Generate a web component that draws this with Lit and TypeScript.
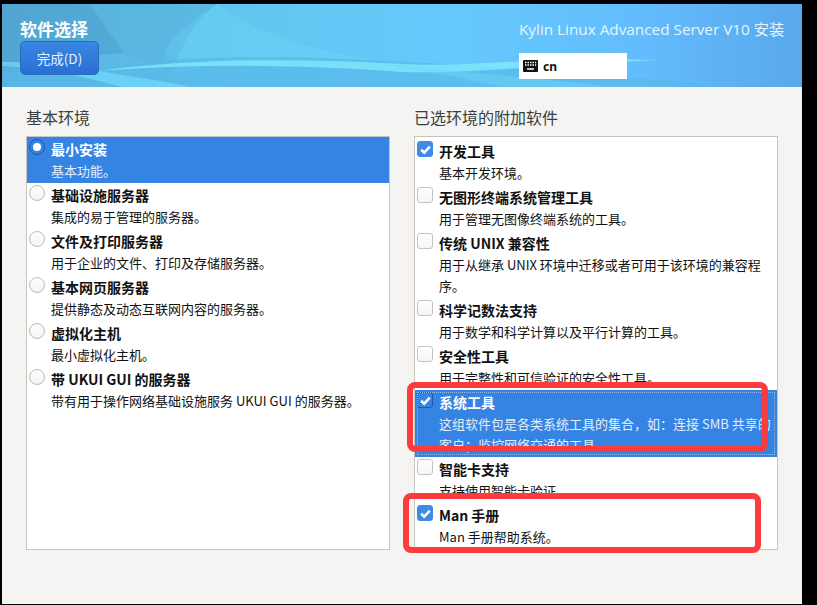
import { LitElement, html, css, svg } from 'lit'
import { customElement } from 'lit/decorators.js'
import { classMap } from 'lit/directives/class-map.js'

interface Opt {
  title: string
  desc: string
  on?: boolean
  sel?: boolean
  focus?: boolean
}

const envs: Opt[] = [
  { title: '最小安装', desc: '基本功能。', on: true, sel: true },
  { title: '基础设施服务器', desc: '集成的易于管理的服务器。' },
  { title: '文件及打印服务器', desc: '用于企业的文件、打印及存储服务器。' },
  { title: '基本网页服务器', desc: '提供静态及动态互联网内容的服务器。' },
  { title: '虚拟化主机', desc: '最小虚拟化主机。' },
  { title: '带 UKUI GUI 的服务器', desc: '带有用于操作网络基础设施服务 UKUI GUI 的服务器。' },
]

const addons: Opt[] = [
  { title: '开发工具', desc: '基本开发环境。', on: true },
  { title: '无图形终端系统管理工具', desc: '用于管理无图像终端系统的工具。' },
  { title: '传统 UNIX 兼容性', desc: '用于从继承 UNIX 环境中迁移或者可用于该环境的兼容程序。' },
  { title: '科学记数法支持', desc: '用于数学和科学计算以及平行计算的工具。' },
  { title: '安全性工具', desc: '用于完整性和可信验证的安全性工具。' },
  { title: '系统工具', desc: '这组软件包是各类系统工具的集合，如：连接 SMB 共享的客户；监控网络交通的工具。', on: true, sel: true, focus: true },
  { title: '智能卡支持', desc: '支持使用智能卡验证。' },
  { title: 'Man 手册', desc: 'Man 手册帮助系统。', on: true },
]

const waves = svg`
  <defs>
    <linearGradient id="base" x1="0" y1="0" x2="1" y2="0">
      <stop offset="0" stop-color="#57b0dc"/>
      <stop offset="0.3" stop-color="#62c6f0"/>
      <stop offset="0.55" stop-color="#66c9fb"/>
      <stop offset="0.8" stop-color="#63bcfd"/>
      <stop offset="1" stop-color="#58a8ec"/>
    </linearGradient>
  </defs>
  <rect width="800" height="83" fill="url(#base)"/>
  <path d="M0 0H88L122 49L60 54L0 64Z" fill="#4c9ccb" opacity=".55"/>
  <path d="M88 0H215C170 30 150 50 170 70L122 49Z" fill="#58b4de" opacity=".7"/>
  <path d="M215 0C260 30 300 46 400 60C300 52 240 58 170 70C180 40 190 20 215 0Z" fill="#6ad4f4" opacity=".55"/>
  <path d="M0 70C100 58 220 50 320 54C420 58 520 64 740 83H0Z" fill="#58b8e8" opacity=".65"/>
  <path d="M96 67C190 54 300 54 400 60C470 64 520 52 660 56C520 62 470 70 400 68C300 60 190 60 96 67Z" fill="#82e8fc" opacity=".8"/>
  <path d="M0 58C40 58 110 68 190 83H120C80 72 40 64 0 62Z" fill="#72dcfa" opacity=".7"/>
  <path d="M380 60C480 70 560 76 610 83H500C460 74 420 66 380 60Z" fill="#6ed4f8" opacity=".5"/>
`

@customElement('app-root')
export class AppRoot extends LitElement {
  static styles = css`
    :host {
      display: block;
      width: 817px;
      height: 605px;
      box-sizing: border-box;
      padding: 4px 15px 1px 2px;
      background: #000;
      font-family: "Noto Sans CJK SC", "Noto Sans", sans-serif;
      color: #2e3436;
      position: relative;
      overflow: hidden;
    }

    .window {
      height: 600px;
      display: flex;
      flex-direction: column;
      background: #f5f4f2;
    }

    .header {
      position: relative;
      height: 83px;
      flex: none;
      display: flex;
      justify-content: space-between;
      box-sizing: border-box;
      padding: 13px 18px 0;
      overflow: hidden;
    }
    .bg { position: absolute; inset: 0; width: 100%; height: 100%; }
    .left, .right { position: relative; display: flex; flex-direction: column; }

    .title {
      font-size: 17px;
      font-weight: 700;
      line-height: 24px;
      color: #fff;
    }
    .done {
      width: 79px;
      height: 34px;
      box-sizing: border-box;
      border: 1px solid #2a6cba;
      border-radius: 5px;
      background: linear-gradient(#3a86e4, #2a6fd2);
      color: #e8f1fb;
      font: 13.5px/32px "Noto Sans CJK SC", sans-serif;
      text-align: center;
      padding: 0;
    }

    .right { width: 265px; }
    .product {
      font: 15.3px/20px "Open Sans", "Noto Sans CJK SC", sans-serif;
      color: #e6f5fd;
      white-space: nowrap;
      margin-top: 2px;
    }
    .kbd {
      margin-top: 14px;
      width: 108px;
      height: 26px;
      background: #fff;
      display: flex;
      align-items: center;
      gap: 5px;
      padding-left: 4px;
      box-sizing: border-box;
      font: 700 12px "Noto Sans", sans-serif;
      color: #111;
    }
    .kbd svg { width: 15px; height: 14px; }

    .body {
      display: flex;
      gap: 24px;
      padding: 17px 0 0 24px;
    }
    .col { width: 364px; }
    .col h2 {
      margin: 0 0 6px;
      font-size: 16px;
      font-weight: 400;
      line-height: 26px;
      color: #3a3f40;
    }
    .list {
      height: 414px;
      box-sizing: border-box;
      border: 1px solid #c8c5c0;
      background: #fff;
      overflow: hidden;
    }
    .list.addons { padding-top: 2px; }

    .row {
      display: flex;
      gap: 6px;
      padding: 2px 3px 2px 2px;
      box-sizing: border-box;
      color: #111;
      position: relative;
    }
    .row.sel { background: #3584e4; color: #fff; }
    .row.focus::after {
      content: "";
      position: absolute;
      inset: 2px;
      border: 1px dotted #8db8ee;
    }

    .text { flex: 1; min-width: 0; margin-top: -1px; }
    .name { font-size: 14px; font-weight: 700; line-height: 22px; }
    .desc { font-size: 13px; line-height: 21px; }
    .sel .desc { color: #e4eefb; }

    .radio {
      flex: none;
      width: 16px;
      height: 16px;
      box-sizing: border-box;
      border: 1px solid #bdb9b3;
      border-radius: 50%;
      background: linear-gradient(#fff, #f4f3f1);
      display: flex;
      align-items: center;
      justify-content: center;
    }
    .radio.on { background: #3584e4; border-color: #1f5aa6; }
    .radio.on::before {
      content: "";
      width: 8px;
      height: 8px;
      border-radius: 50%;
      background: #fff;
    }

    .check {
      flex: none;
      width: 16px;
      height: 16px;
      box-sizing: border-box;
      border: 1px solid #c6c3bd;
      border-radius: 3px;
      background: linear-gradient(#fff, #f6f5f3);
      display: flex;
      align-items: center;
      justify-content: center;
    }
    .check svg { width: 13px; height: 13px; }
    .check.on { background: #3f8ae6; border-color: #3f8ae6; }
    .sel .check.on { background: #3584e4; border-color: #1f5aa6; }

    .mark {
      position: absolute;
      box-sizing: border-box;
      border: 6px solid #fb3b3e;
      border-radius: 8px;
    }
    .mark-a { left: 407px; top: 382px; width: 361px; height: 70px; }
    .mark-b { left: 403px; top: 493px; width: 358px; height: 60px; }
  `

  private item(o: Opt, kind: 'radio' | 'check') {
    const rowCls = { row: true, sel: !!o.sel, focus: !!o.focus }
    return html`
      <div class=${classMap(rowCls)}>
        ${kind === 'radio'
          ? html`<span class=${classMap({ radio: true, on: !!o.on })}></span>`
          : html`<span class=${classMap({ check: true, on: !!o.on })}>
              ${o.on
                ? html`<svg viewBox="0 0 12 12"><path d="M2 6.2L4.8 9L10 3.4" fill="none" stroke="#fff" stroke-width="2.4"/></svg>`
                : ''}
            </span>`}
        <div class="text">
          <div class="name">${o.title}</div>
          <div class="desc">${o.desc}</div>
        </div>
      </div>
    `
  }

  render() {
    return html`
      <div class="window">
        <header class="header">
          <svg class="bg" viewBox="0 0 800 83" preserveAspectRatio="none">${waves}</svg>
          <div class="left">
            <div class="title">软件选择</div>
            <button class="done">完成(D)</button>
          </div>
          <div class="right">
            <div class="product">Kylin Linux Advanced Server V10 安装</div>
            <div class="kbd">
              <svg viewBox="0 0 15 14">
                <rect x="0" y="1" width="15" height="12" rx="1" fill="#111"/>
                <path d="M2 3.5h1.5M4.5 3.5H6M7 3.5h1.5M9.5 3.5H11M12 3.5h1.2M2 6h1.5M4.5 6H6M7 6h1.5M9.5 6H11M12 6h1.2M4 10h7" stroke="#fff" stroke-width="1.3"/>
              </svg>
              cn
            </div>
          </div>
        </header>
        <div class="body">
          <section class="col">
            <h2>基本环境</h2>
            <div class="list">${envs.map(o => this.item(o, 'radio'))}</div>
          </section>
          <section class="col">
            <h2>已选环境的附加软件</h2>
            <div class="list addons">${addons.map(o => this.item(o, 'check'))}</div>
          </section>
        </div>
      </div>
      <div class="mark mark-a"></div>
      <div class="mark mark-b"></div>
    `
  }
}
